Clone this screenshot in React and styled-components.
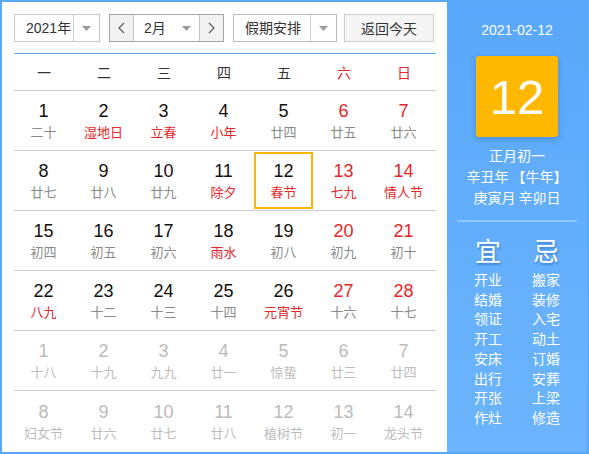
import styled, { createGlobalStyle } from 'styled-components';

const GlobalStyle = createGlobalStyle`
    * { box-sizing: border-box; }
    body {
        margin: 0;
        font-family: Arial, "Liberation Sans", "Noto Sans CJK SC", sans-serif;
    }
`;

const weekdays = ['一', '二', '三', '四', '五', '六', '日'];

// [day, lunar, lunarRed, dimmed]
const weeks = [
    [[1, '二十'], [2, '湿地日', 1], [3, '立春', 1], [4, '小年', 1], [5, '廿四'], [6, '廿五'], [7, '廿六']],
    [[8, '廿七'], [9, '廿八'], [10, '廿九'], [11, '除夕', 1], [12, '春节', 1], [13, '七九', 1], [14, '情人节', 1]],
    [[15, '初四'], [16, '初五'], [17, '初六'], [18, '雨水', 1], [19, '初八'], [20, '初九'], [21, '初十']],
    [[22, '八九', 1], [23, '十二'], [24, '十三'], [25, '十四'], [26, '元宵节', 1], [27, '十六'], [28, '十七']],
    [[1, '十八', 0, 1], [2, '十九', 0, 1], [3, '九九', 0, 1], [4, '廿一', 0, 1], [5, '惊蛰', 0, 1], [6, '廿三', 0, 1], [7, '廿四', 0, 1]],
    [[8, '妇女节', 0, 1], [9, '廿六', 0, 1], [10, '廿七', 0, 1], [11, '廿八', 0, 1], [12, '植树节', 0, 1], [13, '初一', 0, 1], [14, '龙头节', 0, 1]],
];

const good = ['开业', '结婚', '领证', '开工', '安床', '出行', '开张', '作灶'];
const bad = ['搬家', '装修', '入宅', '动土', '订婚', '安葬', '上梁', '修造'];

function Caret() {
    return (
        <svg width="9" height="5" viewBox="0 0 9 5">
            <path d="M0 0 L9 0 L4.5 5 Z" fill="#9a9a9a" />
        </svg>
    );
}

function Chevron({ dir }) {
    return (
        <svg width="7" height="12" viewBox="0 0 7 12">
            <polyline
                points={dir === 'left' ? '6,1 1,6 6,11' : '1,1 6,6 1,11'}
                fill="none" stroke="#555" strokeWidth="1.1" />
        </svg>
    );
}

function App() {
    return (
        <>
            <GlobalStyle />
            <Frame>
                <Main>
                    <Toolbar>
                        <Select width="86px" border="#c6c6c6">
                            <SelectText>2021年</SelectText>
                            <CaretBox divider><Caret /></CaretBox>
                        </Select>
                        <MonthGroup>
                            <StepButton side="left"><Chevron dir="left" /></StepButton>
                            <MonthSelect>
                                <SelectText pad="10px">2月</SelectText>
                                <CaretBox><Caret /></CaretBox>
                            </MonthSelect>
                            <StepButton side="right"><Chevron dir="right" /></StepButton>
                        </MonthGroup>
                        <Select width="104px" border="#bcbcbc">
                            <SelectText>假期安排</SelectText>
                            <CaretBox divider><Caret /></CaretBox>
                        </Select>
                        <TodayButton>返回今天</TodayButton>
                    </Toolbar>

                    <Calendar>
                        <WeekHead>
                            {weekdays.map((w, i) => (
                                <WeekName key={w} weekend={i > 4}>{w}</WeekName>
                            ))}
                        </WeekHead>
                        {weeks.map((week, r) => (
                            <WeekRow key={r} last={r === weeks.length - 1}>
                                {week.map(([day, lunar, red, dim], c) => (
                                    <DayCell key={c} today={r === 1 && c === 4}>
                                        <DayNum weekend={c > 4} dim={dim}>{day}</DayNum>
                                        <Lunar red={red} dim={dim}>{lunar}</Lunar>
                                    </DayCell>
                                ))}
                            </WeekRow>
                        ))}
                    </Calendar>
                </Main>

                <Side>
                    <SideDate>2021-02-12</SideDate>
                    <BigDay>12</BigDay>
                    <LunarInfo>
                        <div>正月初一</div>
                        <div>辛丑年 【牛年】</div>
                        <div>庚寅月 辛卯日</div>
                    </LunarInfo>
                    <Divider />
                    <Almanac>
                        <AlmanacCol>
                            <AlmanacHead>宜</AlmanacHead>
                            {good.map(g => <AlmanacItem key={g}>{g}</AlmanacItem>)}
                        </AlmanacCol>
                        <AlmanacCol>
                            <AlmanacHead>忌</AlmanacHead>
                            {bad.map(b => <AlmanacItem key={b}>{b}</AlmanacItem>)}
                        </AlmanacCol>
                    </Almanac>
                </Side>
            </Frame>
        </>
    );
}

export default App;

const Frame = styled.div`
    width: 589px;
    height: 454px;
    border: 2px solid #5aa9f7;
    display: flex;
    background: #fff;
`;

const Main = styled.div`
    width: 445px;
    padding: 12px 11px 0 12px;
    display: flex;
    flex-direction: column;
`;

const Toolbar = styled.div`
    display: flex;
    height: 28px;
    font-size: 14px;
    color: #333;
    margin-bottom: 11px;
`;

const Select = styled.div`
    width: ${({ width }) => width};
    height: 28px;
    border: 1px solid ${({ border }) => border};
    display: flex;
    align-items: center;
    margin-right: 9px;
    background: #fff;
    &:nth-of-type(3) { margin-right: 7px; }
`;

const SelectText = styled.span`
    flex: 1;
    padding-left: ${({ pad }) => pad || '11px'};
    white-space: nowrap;
    line-height: 26px;
`;

const CaretBox = styled.span`
    width: 26px;
    height: 100%;
    display: flex;
    align-items: center;
    justify-content: center;
    border-left: ${({ divider }) => divider ? '1px solid #d0d0d0' : 'none'};
`;

const MonthGroup = styled.div`
    width: 115px;
    height: 28px;
    border: 1px solid #a6a6a6;
    display: flex;
    margin-right: 9px;
`;

const StepButton = styled.span`
    width: 24px;
    display: flex;
    align-items: center;
    justify-content: center;
    background: #f2f2f2;
    border-${({ side }) => side === 'left' ? 'right' : 'left'}: 1px solid #c4c4c4;
`;

const MonthSelect = styled.div`
    flex: 1;
    display: flex;
    align-items: center;
`;

const TodayButton = styled.div`
    width: 90px;
    height: 28px;
    border: 1px solid #cfcfcf;
    background: #f5f5f5;
    display: flex;
    align-items: center;
    justify-content: center;
`;

const Calendar = styled.div`
    border-top: 1px solid #5aa9f7;
`;

const WeekHead = styled.div`
    display: grid;
    grid-template-columns: repeat(7, 60px);
    height: 37px;
    border-bottom: 1px solid #cccccc;
    align-items: center;
`;

const WeekName = styled.div`
    text-align: center;
    font-size: 14px;
    color: ${({ weekend }) => weekend ? '#e5262a' : '#333'};
    font-family: "Noto Sans CJK SC", sans-serif;
`;

const WeekRow = styled.div`
    display: grid;
    grid-template-columns: repeat(7, 60px);
    height: 60px;
    border-bottom: ${({ last }) => last ? 'none' : '1px solid #cccccc'};
`;

const DayCell = styled.div`
    display: flex;
    flex-direction: column;
    align-items: center;
    justify-content: center;
    margin: 1px 1px 1px 0;
    border: 2px solid ${({ today }) => today ? '#ffb400' : 'transparent'};
    padding-top: 1px;
`;

const DayNum = styled.div`
    font-size: 18px;
    line-height: 21px;
    color: ${({ dim, weekend }) => dim ? '#bbbbbb' : weekend ? '#e5262a' : '#111'};
`;

const Lunar = styled.div`
    font-size: 13px;
    line-height: 19px;
    font-family: "Noto Sans CJK SC", sans-serif;
    color: ${({ dim, red }) => dim ? '#bdbdbd' : red ? '#e5262a' : '#8a8a8a'};
    white-space: nowrap;
`;

const Side = styled.div`
    flex: 1;
    background: linear-gradient(180deg, #5aa8fb 0%, #6cb4fd 100%);
    display: flex;
    flex-direction: column;
    align-items: center;
    color: #fff;
    padding-top: 20px;
`;

const SideDate = styled.div`
    font-size: 14px;
    line-height: 17px;
    margin-bottom: 17px;
`;

const BigDay = styled.div`
    width: 82px;
    height: 81px;
    background: #ffb800;
    border-radius: 3px;
    box-shadow: 0 2px 6px rgba(40, 90, 160, 0.35);
    display: flex;
    align-items: center;
    justify-content: center;
    font-size: 49px;
    margin-bottom: 8px;
`;

const LunarInfo = styled.div`
    font-family: "Noto Sans CJK SC", sans-serif;
    font-size: 14px;
    line-height: 21px;
    text-align: center;
`;

const Divider = styled.div`
    width: 120px;
    height: 2px;
    background: #92c8fc;
    margin: 12px 0 12px;
`;

const Almanac = styled.div`
    display: flex;
    gap: 30px;
    font-family: "Noto Sans CJK SC", sans-serif;
`;

const AlmanacCol = styled.div`
    display: flex;
    flex-direction: column;
    align-items: center;
`;

const AlmanacHead = styled.div`
    font-size: 26px;
    line-height: 32px;
    text-shadow: 1px 2px 2px rgba(30, 80, 150, 0.45);
    margin-bottom: 4px;
`;

const AlmanacItem = styled.div`
    font-size: 14px;
    line-height: 19.7px;
`;
